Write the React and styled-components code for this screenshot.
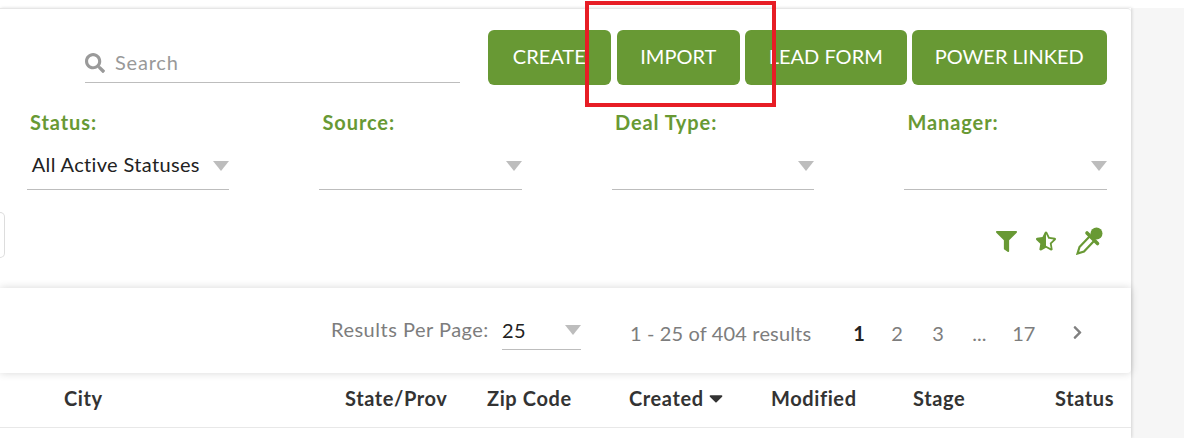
import React from "react";
import styled, { createGlobalStyle } from "styled-components";
import { FaFilter, FaSearch, FaStarHalfAlt, FaCaretDown, FaChevronRight } from "react-icons/fa";

const GREEN = "#689934";

const GlobalStyle = createGlobalStyle`
  html, body {
    margin: 0;
    padding: 0;
    background: #fff;
    font-family: "Lato", "Open Sans", sans-serif;
  }
`;

const Page = styled.div`
  position: relative;
  width: 1184px;
  height: 438px;
  overflow: hidden;
  padding-top: 8px;
  box-sizing: border-box;
`;

const Backdrop = styled.div`
  height: 430px;
  background: #f6f6f6;
`;

const Column = styled.div`
  width: 1131px;
  height: 430px;
  background: #fff;
  box-shadow: 1px 0 3px rgba(0, 0, 0, 0.14);
`;

const Panel = styled.section`
  height: 280px;
  box-sizing: border-box;
  padding: 21px 24.25px 0 26.75px;
  border-top: 1px solid #e6e6e6;
  border-top-right-radius: 4px;
`;

const TopRow = styled.div`
  display: flex;
  height: 55px;
  margin-left: 58.25px;
`;

const SearchBox = styled.div`
  display: flex;
  align-items: center;
  gap: 10px;
  width: 375px;
  height: 34px;
  margin-top: 19px;
  padding-bottom: 7px;
  box-sizing: border-box;
  border-bottom: 1px solid #bdbdbd;
  color: #999;
  font-size: 20px;
  letter-spacing: 0.8px;
  svg {
    width: 20px;
    height: 20px;
    margin-top: 2px;
    color: #9a9a9a;
  }
`;

const Buttons = styled.div`
  display: flex;
  margin-left: 28px;
`;

const Button = styled.button`
  width: ${({ $width }) => $width}px;
  margin-right: ${({ $gap }) => $gap}px;
  border: 0;
  border-radius: 6px;
  padding: 0 0 4px;
  background: ${GREEN};
  color: #fff;
  font: 400 20px "Lato", sans-serif;
`;

const Filters = styled.div`
  display: grid;
  grid-template-columns: repeat(4, 202.5px);
  column-gap: 90px;
  margin-top: 26px;
`;

const Label = styled.div`
  margin-left: 3.25px;
  color: ${GREEN};
  font-size: 20px;
  font-weight: 700;
  letter-spacing: 0.9px;
  line-height: 22px;
`;

const Select = styled.div`
  display: flex;
  align-items: center;
  justify-content: space-between;
  height: 48px;
  margin-top: 9px;
  box-sizing: border-box;
  border-bottom: 1px solid #bdbdbd;
  color: #222;
  font-size: 20px;
  letter-spacing: 0.35px;
`;

const SelectValue = styled.span`
  margin: -4px 0 0 5px;
`;

const Arrow = styled.i`
  width: 0;
  height: 0;
  border-left: 8px solid transparent;
  border-right: 8px solid transparent;
  border-top: 10px solid #bdbdbd;
`;

const ToolRow = styled.div`
  display: flex;
  justify-content: space-between;
  align-items: center;
  height: 46px;
  margin: 22px 0 0 -27px;
`;

const Stub = styled.div`
  width: 5px;
  height: 46px;
  box-sizing: border-box;
  border: 1px solid #ddd;
  border-left: 0;
  border-radius: 0 5px 5px 0;
`;

const Tools = styled.div`
  display: flex;
  align-items: center;
  gap: 19.5px;
  margin-top: 12px;
  margin-right: 4px;
  color: ${GREEN};
`;

const PagerPanel = styled.section`
  display: flex;
  align-items: center;
  height: 85px;
  box-sizing: border-box;
  padding-left: 331px;
  background: #fff;
  border-radius: 0 0 4px 0;
  box-shadow: 0 0 8px rgba(0, 0, 0, 0.16);
  position: relative;
  color: #7d7d7d;
  font-size: 20px;
`;

const PerLabel = styled.span`
  margin-top: -3px;
  letter-spacing: 0.5px;
`;

const PerPage = styled.div`
  display: flex;
  align-items: center;
  justify-content: space-between;
  width: 79px;
  height: 38px;
  margin-left: 13px;
  box-sizing: border-box;
  border-bottom: 1px solid #bdbdbd;
  color: #222;
  letter-spacing: 0.5px;
`;

const Count = styled.span`
  margin: 4px 0 0 49px;
  letter-spacing: 0.15px;
`;

const Pages = styled.div`
  display: flex;
  align-items: center;
  margin: 4px 0 0 42px;
`;

const PageLink = styled.span`
  width: ${({ $width }) => $width}px;
  color: ${({ $active }) => ($active ? "#222" : "#7d7d7d")};
  font-weight: ${({ $active }) => ($active ? 700 : 400)};
`;

const Chevron = styled(FaChevronRight)`
  width: 15px;
  height: 15px;
  margin-left: 5px;
  color: #808080;
`;

const HeadRow = styled.div`
  display: grid;
  grid-template-columns: 281px repeat(6, 142px);
  align-items: center;
  height: 55px;
  padding: 0 0 4px 64px;
  box-sizing: border-box;
  border-bottom: 1px solid #e8e8e8;
  color: #333;
  font-size: 20px;
  font-weight: 700;
  letter-spacing: 0.6px;
  white-space: nowrap;
`;

const HeadCell = styled.div`
  display: flex;
  align-items: center;
  gap: 1px;
`;

const Annotation = styled.div`
  position: absolute;
  left: 585px;
  top: 1px;
  width: 191px;
  height: 106px;
  box-sizing: border-box;
  border: 4px solid #e71d25;
`;

// outline dropper with a solid bulb, none of the icon sets has this one
const Dropper = () => (
  <svg width="27" height="28" viewBox="0 0 27 28" fill="none">
    <circle cx="20.5" cy="6.5" r="6" fill={GREEN} />
    <path d="M11 6l10.5 10.5" stroke={GREEN} strokeWidth="3.6" strokeLinecap="round" />
    <path d="M13.5 9.5L3.5 20 1.5 26.5 8 24.5 18 14" stroke={GREEN} strokeWidth="2.2" />
  </svg>
);

const filters = [
  { label: "Status:", value: "All Active Statuses" },
  { label: "Source:" },
  { label: "Deal Type:" },
  { label: "Manager:" },
];

const buttons = [
  { text: "CREATE", width: 123, gap: 6 },
  { text: "IMPORT", width: 123, gap: 5 },
  { text: "LEAD FORM", width: 162, gap: 5 },
  { text: "POWER LINKED", width: 195, gap: 0 },
];

const pages = [
  { text: "1", width: 38, active: true },
  { text: "2", width: 41 },
  { text: "3", width: 40 },
  { text: "...", width: 40 },
  { text: "17", width: 53 },
];

const columns = ["City", "State/Prov", "Zip Code", "Created", "Modified", "Stage", "Status"];

export default function App() {
  return (
    <Page>
      <GlobalStyle />
      <Backdrop>
        <Column>
          <Panel>
            <TopRow>
              <SearchBox>
                <FaSearch />
                Search
              </SearchBox>
              <Buttons>
                {buttons.map((b) => (
                  <Button key={b.text} $width={b.width} $gap={b.gap}>
                    {b.text}
                  </Button>
                ))}
              </Buttons>
            </TopRow>
            <Filters>
              {filters.map((f) => (
                <div key={f.label}>
                  <Label>{f.label}</Label>
                  <Select>
                    <SelectValue>{f.value}</SelectValue>
                    <Arrow />
                  </Select>
                </div>
              ))}
            </Filters>
            <ToolRow>
              <Stub />
              <Tools>
                <FaFilter size={21} />
                <FaStarHalfAlt size={20} />
                <Dropper />
              </Tools>
            </ToolRow>
          </Panel>
          <PagerPanel>
            <PerLabel>Results Per Page:</PerLabel>
            <PerPage>
              25
              <Arrow />
            </PerPage>
            <Count>1 - 25 of 404 results</Count>
            <Pages>
              {pages.map((p) => (
                <PageLink key={p.text} $width={p.width} $active={p.active}>
                  {p.text}
                </PageLink>
              ))}
              <Chevron />
            </Pages>
          </PagerPanel>
          <HeadRow>
            {columns.map((c) => (
              <HeadCell key={c}>
                {c}
                {c === "Created" && <FaCaretDown size={22} />}
              </HeadCell>
            ))}
          </HeadRow>
        </Column>
      </Backdrop>
      <Annotation />
    </Page>
  );
}
